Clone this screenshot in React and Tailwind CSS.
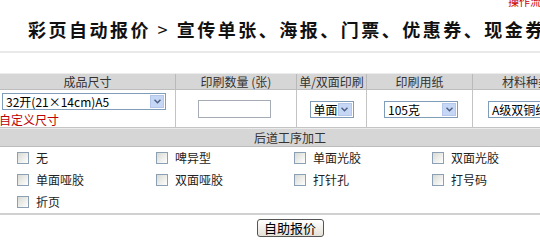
import React from 'react';

const font = { fontFamily: '"Noto Sans CJK SC", "Noto Sans", sans-serif' };

function FakeSelect({ value, className }) {
  return (
    <div className={`flex items-center justify-between border border-[#7f9db9] bg-white h-[17px] pl-[3px] pr-[1px] ${className}`}>
      <span className="text-[12px] leading-[15px] text-black whitespace-nowrap">{value}</span>
      <span className="flex items-center justify-center w-[14px] h-[13px] bg-[#c6d7f5] border border-[#b4c6ea] shrink-0">
        <svg width="7" height="5" viewBox="0 0 7 5">
          <path d="M0.5 0.8 L3.5 3.8 L6.5 0.8" fill="none" stroke="#4d6185" strokeWidth="1.5" />
        </svg>
      </span>
    </div>
  );
}

function Box({ label }) {
  return (
    <div className="flex items-center gap-[7px] h-[22px]">
      <span className="w-[12px] h-[12px] border border-[#8b9fb5] bg-gradient-to-br from-[#d9d9d4] to-white shrink-0" />
      <span className="text-[12px] text-[#222] leading-none">{label}</span>
    </div>
  );
}

export default function App() {
  const cols = ['成品尺寸', '印刷数量 (张)', '单/双面印刷', '印刷用纸', '材料种类'];
  const widths = ['w-[176px]', 'w-[121px]', 'w-[70px]', 'w-[106px]', 'w-[107px]'];
  const options = [
    ['无', '啤异型', '单面光胶', '双面光胶'],
    ['单面哑胶', '双面哑胶', '打针孔', '打号码'],
    ['折页'],
  ];

  return (
    <div className="w-[540px] h-[240px] overflow-hidden bg-white" style={font}>
      <div className="w-[580px]">
        {/* top link */}
        <div className="h-[8px] overflow-hidden pl-[508px]">
          <div className="text-[11px] leading-[11px] -mt-[4px] text-[#cc0000] whitespace-nowrap">操作流程</div>
        </div>

        {/* title */}
        <div className="h-[43px] flex items-center pl-[28px]">
          <h1 className="text-[18px] font-bold tracking-[2.5px] text-[#111] whitespace-nowrap">
            彩页自动报价 <span className="font-normal">&gt;</span> 宣传单张、海报、门票、优惠券、现金券
          </h1>
        </div>
        <div className="h-[2px] bg-[#e9e9e9]" />

        {/* main table */}
        <div className="mt-[20px]">
          <div className="flex bg-[#d6d6d6] border-t border-[#ececec] border-b border-b-[#bdbdbd] h-[17px]">
            {cols.map((c, i) => (
              <div
                key={c}
                className={`${widths[i]} shrink-0 text-center text-[12px] leading-[15px] text-[#333] border-r border-[#b9b9b9]`}
              >
                {c}
              </div>
            ))}
          </div>
          <div className="flex h-[38px] border-b border-[#c4c4c4]">
            <div className={`${widths[0]} shrink-0 border-r border-[#c4c4c4] pt-[3px] pl-[2px] pr-[10px]`}>
              <FakeSelect value="32开(21×14cm)A5" className="w-[164px]" />
              <div className="-ml-[3px] mt-[3px] text-[12px] leading-[14px] text-[#c00000]">自定义尺寸</div>
            </div>
            <div className={`${widths[1]} shrink-0 border-r border-[#c4c4c4] flex items-center pl-[22px]`}>
              <div className="w-[73px] h-[18px] border border-[#a5acb5] bg-white mt-[1px]" />
            </div>
            <div className={`${widths[2]} shrink-0 border-r border-[#c4c4c4] flex items-center justify-center`}>
              <FakeSelect value="单面" className="w-[44px] mt-[1px]" />
            </div>
            <div className={`${widths[3]} shrink-0 border-r border-[#c4c4c4] flex items-center pl-[17px]`}>
              <FakeSelect value="105克" className="w-[74px] mt-[1px]" />
            </div>
            <div className={`${widths[4]} shrink-0 flex items-center pl-[15px]`}>
              <FakeSelect value="A级双铜纸" className="w-[90px] mt-[1px]" />
            </div>
          </div>

          {/* post processing */}
          <div className="bg-[#d6d6d6] border-t border-[#ececec] border-b border-b-[#bdbdbd] h-[19px] text-center text-[12px] leading-[17px] text-[#333]">
            后道工序加工
          </div>
          <div className="pl-[17px] border-b-2 border-[#d0d0d0]">
            {options.map((row, r) => (
              <div key={r} className="grid grid-cols-[139px_138px_138px_138px]">
                {row.map((o) => (
                  <Box key={o} label={o} />
                ))}
              </div>
            ))}
          </div>
          <div className="flex justify-center pt-[4px]">
            <button className="w-[67px] h-[18px] rounded-[3px] border border-[#555] bg-gradient-to-b from-white to-[#e4e1d6] text-[13px] leading-[16px] text-black">
              自助报价
            </button>
          </div>
        </div>
      </div>
    </div>
  );
}
